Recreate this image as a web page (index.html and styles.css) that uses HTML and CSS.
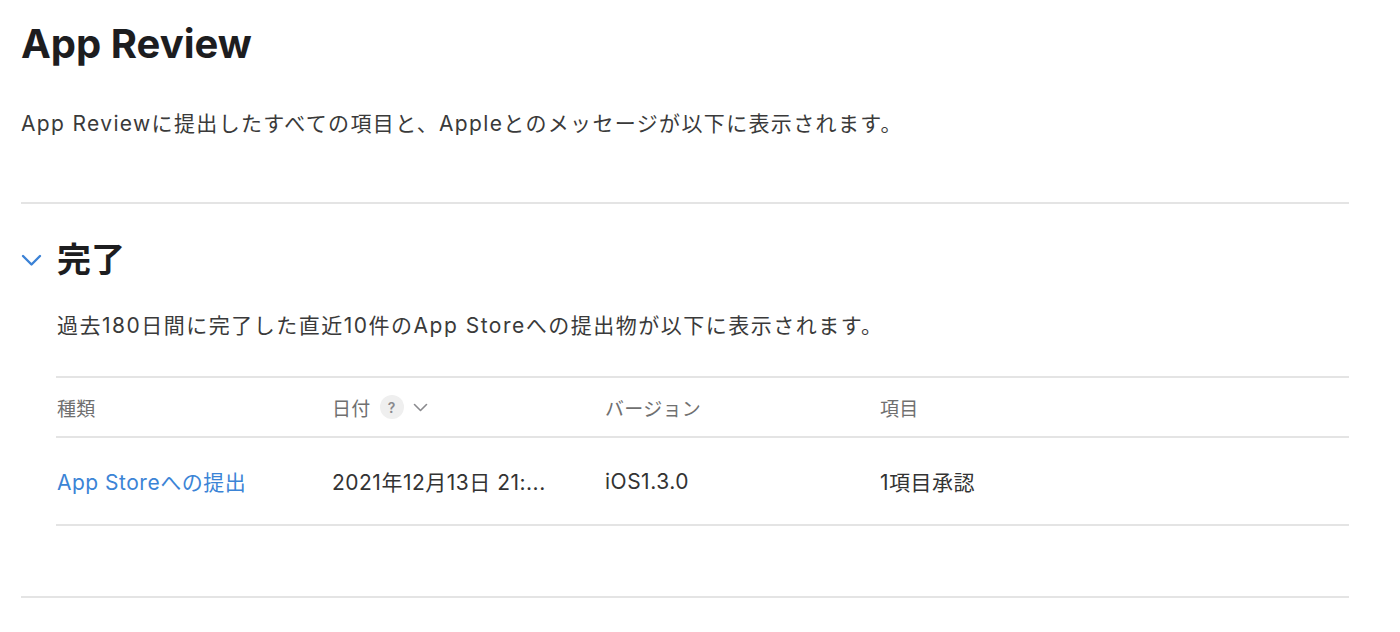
FILE: index.html
```html
<!DOCTYPE html>
<html lang="ja">
<head>
    <meta charset="UTF-8">
    <meta name="viewport" content="width=device-width, initial-scale=1.0">
    <title>App Review</title>
    <link rel="stylesheet" href="styles.css">
</head>
<body>
    <main class="page">
        <h1 class="page-title">App Review</h1>
        <p class="page-desc">App Reviewに提出したすべての項目と、Appleとのメッセージが以下に表示されます。</p>

        <section class="group">
            <div class="group-head">
                <svg class="group-toggle" width="21" height="13" viewBox="0 0 21 13">
                    <path d="M2 2 L10.5 10.5 L19 2" fill="none" stroke="#3b82d6" stroke-width="2.4" stroke-linecap="round" stroke-linejoin="round"/>
                </svg>
                <h2>完了</h2>
            </div>

            <div class="group-body">
                <p class="group-desc">過去180日間に完了した直近10件のApp Storeへの提出物が以下に表示されます。</p>

                <div class="table">
                    <div class="row head">
                        <div class="cell">種類</div>
                        <div class="cell">
                            日付
                            <span class="help">?</span>
                            <svg class="sort" width="15" height="9" viewBox="0 0 15 9">
                                <path d="M1.5 1.5 L7.5 7.5 L13.5 1.5" fill="none" stroke="#8a8a8e" stroke-width="1.6" stroke-linecap="round" stroke-linejoin="round"/>
                            </svg>
                        </div>
                        <div class="cell">バージョン</div>
                        <div class="cell">項目</div>
                    </div>
                    <div class="row">
                        <div class="cell"><a href="#" class="link">App Storeへの提出</a></div>
                        <div class="cell">2021年12月13日 21:...</div>
                        <div class="cell">iOS1.3.0</div>
                        <div class="cell">1項目承認</div>
                    </div>
                </div>
            </div>
        </section>
    </main>
</body>
</html>
```

FILE: styles.css
```css
body {
    margin: 0;
    background: #fff;
    color: #333;
    font-family: Inter, "Noto Sans CJK JP", sans-serif;
}
.page {
    padding: 20px 51px 0 21px;
}
.page-title {
    margin: 0;
    font-size: 40px;
    line-height: 48px;
    font-weight: 700;
    color: #1d1d1f;
}
.page-desc {
    margin: 41px 0 0;
    font-size: 21px;
    line-height: 30px;
    letter-spacing: 1.35px;
    color: #3a3a3a;
}
.group {
    margin-top: 63px;
    border-top: 2px solid #e4e4e4;
    border-bottom: 2px solid #e4e4e4;
}
.group-head {
    display: flex;
    align-items: center;
    gap: 15px;
    margin-top: 36px;
}
.group-head h2 {
    margin: 0;
    font-size: 34px;
    line-height: 40px;
    font-weight: 700;
    color: #1d1d1f;
}
.group-body {
    padding-left: 35px;
    padding-bottom: 70px;
}
.group-desc {
    margin: 31px 0 0 1px;
    font-size: 21px;
    line-height: 30px;
    letter-spacing: 1.5px;
    color: #3a3a3a;
}
.table {
    margin-top: 35px;
    border-top: 2px solid #e4e4e4;
}
.row {
    display: grid;
    grid-template-columns: 275px 273px 275px 1fr;
    align-items: center;
    height: 86px;
    border-bottom: 2px solid #e4e4e4;
    font-size: 21px;
    letter-spacing: 0.5px;
    color: #333;
}
.row.head {
    height: 58px;
    font-size: 19px;
    letter-spacing: 0.3px;
    color: #707070;
}
.cell {
    padding-left: 1px;
    display: flex;
    align-items: center;
    white-space: nowrap;
}
.help {
    display: inline-flex;
    align-items: center;
    justify-content: center;
    width: 24px;
    height: 24px;
    margin-left: 9px;
    border-radius: 50%;
    background: #efefef;
    color: #8a8a8e;
    font-size: 14px;
    font-weight: 600;
    letter-spacing: 0;
}
.sort {
    margin-left: 9px;
}
.link {
    color: #3b84d6;
    text-decoration: none;
}
```
